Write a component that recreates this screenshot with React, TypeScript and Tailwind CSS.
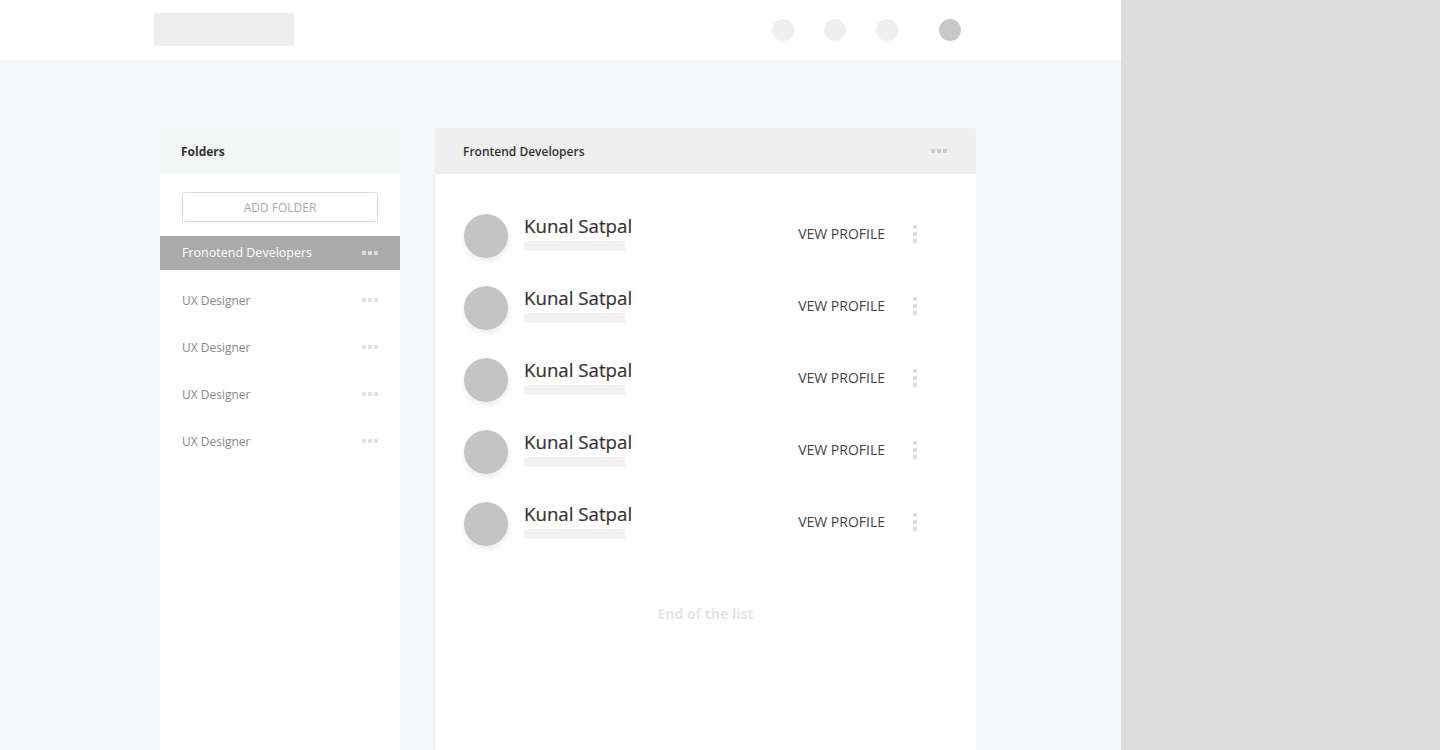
const folders = ["UX Designer", "UX Designer", "UX Designer", "UX Designer"];
const people = [1, 2, 3, 4, 5];

function HDots({ tone }: { tone: string }) {
  return (
    <div className="flex gap-[2px]">
      <span className={`h-[4px] w-[4px] ${tone}`} />
      <span className={`h-[4px] w-[4px] ${tone}`} />
      <span className={`h-[4px] w-[4px] ${tone}`} />
    </div>
  );
}

function VDots() {
  return (
    <div className="flex flex-col gap-[3px]">
      <span className="h-[4px] w-[4px] bg-[#dddddd]" />
      <span className="h-[4px] w-[4px] bg-[#dddddd]" />
      <span className="h-[4px] w-[4px] bg-[#dddddd]" />
    </div>
  );
}

export default function App() {
  return (
    <div
      className="flex h-[750px] w-[1440px] overflow-hidden"
      style={{ fontFamily: '"Open Sans", "Noto Sans", sans-serif' }}
    >
      <div className="flex w-[1121px] flex-col bg-[#f6f7f9]">
        {/* top bar */}
        <header className="flex h-[60px] shrink-0 items-center bg-white pl-[154px]">
          <div className="mb-[1px] h-[33px] w-[140px] bg-[#eeeeee]" />
          <div className="ml-[478px] flex items-center gap-[30px]">
            <span className="h-[22px] w-[22px] rounded-full bg-[#efefef]" />
            <span className="h-[22px] w-[22px] rounded-full bg-[#efefef]" />
            <span className="h-[22px] w-[22px] rounded-full bg-[#efefef]" />
          </div>
          <span className="ml-[41px] h-[22px] w-[22px] rounded-full bg-[#c8c8c8]" />
        </header>

        <div className="flex flex-1 gap-[35px] pl-[160px] pt-[68px]">
          {/* folders */}
          <aside className="flex w-[240px] flex-col bg-white">
            <div className="flex h-[46px] items-center bg-[#f4f5f5] pl-[21px] pt-[1px] text-[12px] font-bold text-[#333333]">
              Folders
            </div>
            <div className="px-[22px] pb-[14px] pt-[18px]">
              <button className="flex h-[30px] w-full items-center justify-center rounded-[3px] border border-[#dcdcdc] pt-[1px] text-[12px] text-[#aaaaaa]">
                ADD FOLDER
              </button>
            </div>
            <div className="flex h-[34px] items-center justify-between bg-[#aaaaaa] px-[22px] text-[12.5px] text-white">
              <span className="pt-[1px]">Fronotend Developers</span>
              <HDots tone="bg-[#dedede]" />
            </div>
            {folders.map((f, i) => (
              <div
                key={i}
                className="mt-[13px] flex h-[34px] items-center justify-between px-[22px] text-[12px] text-[#888888]"
              >
                <span className="pt-[1px]">{f}</span>
                <HDots tone="bg-[#e2e2e2]" />
              </div>
            ))}
          </aside>

          {/* list panel */}
          <section className="flex w-[541px] flex-col">
            <div className="flex h-[46px] items-center justify-between rounded-t-[4px] bg-[#efefef] pl-[28px] pr-[29px] text-[12px] font-semibold text-[#333333]">
              <span className="pt-[1px]">Frontend Developers</span>
              <HDots tone="bg-[#cccccc]" />
            </div>
            <div className="flex-1 bg-white pt-[40px] shadow-[-1px_0_2px_rgba(0,0,0,0.06)]">
              {people.map((p) => (
                <div key={p} className="mb-[28px] flex h-[44px] items-center pl-[29px] pr-[59px]">
                  <span className="h-[44px] w-[44px] rounded-full bg-[#c4c4c4] shadow-[0_3px_6px_rgba(0,0,0,0.08)]" />
                  <div className="ml-[16px] flex flex-1 flex-col">
                    <span className="-mt-[8px] text-[18.7px] leading-[24px] text-[#333333] [-webkit-text-stroke:0.2px_#333333]">
                      Kunal Satpal
                    </span>
                    <span className="mt-[3px] h-[10px] w-[101px] bg-[#f2f2f2]" />
                  </div>
                  <span className="-mt-[6px] text-[14px] text-[#444444]">VEW PROFILE</span>
                  <div className="-mt-[4px] ml-[28px]">
                    <VDots />
                  </div>
                </div>
              ))}
              <div className="pt-[29px] text-center text-[14px] font-bold text-[#e6e6e6]">
                End of the list
              </div>
            </div>
          </section>
        </div>
      </div>
      <div className="flex-1 bg-[#dddddd]" />
    </div>
  );
}
